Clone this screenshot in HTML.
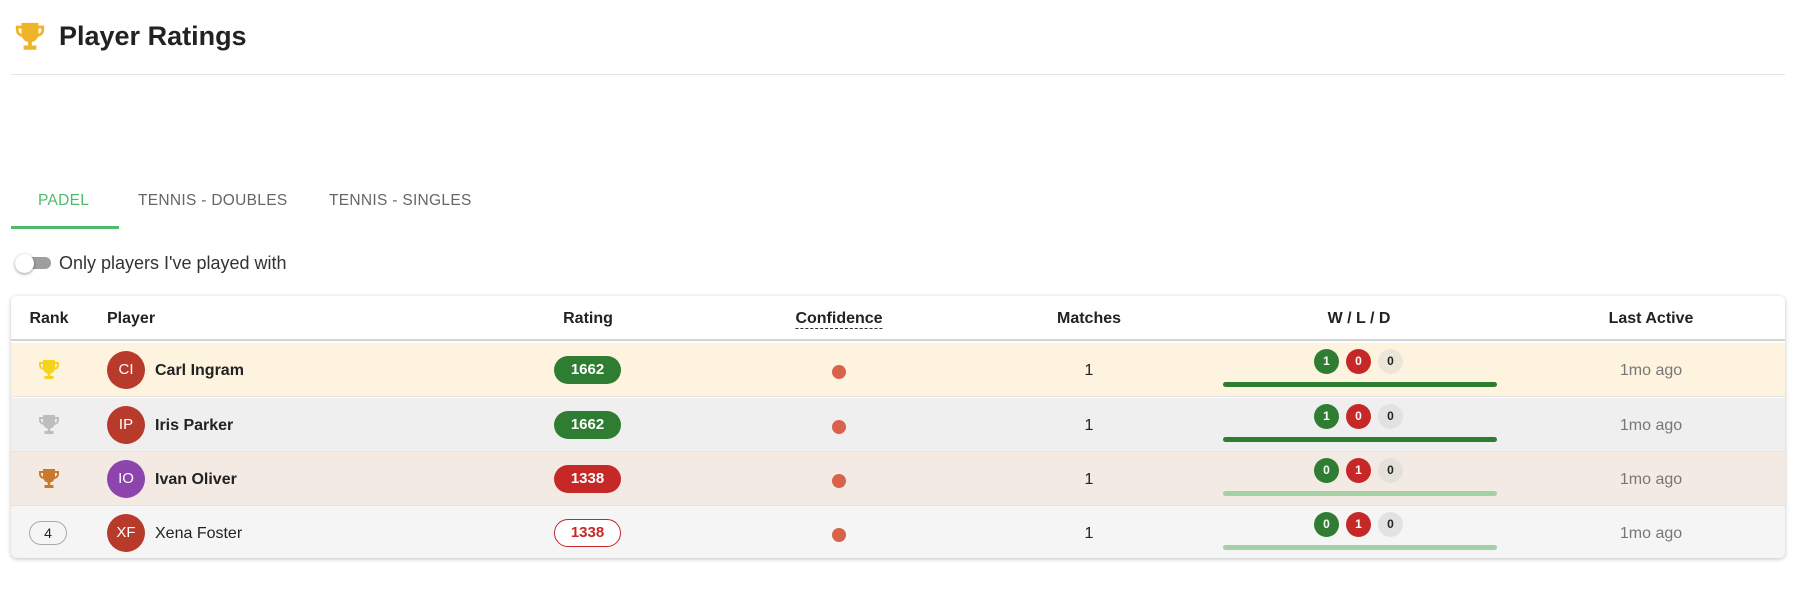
<!DOCTYPE html>
<html><head><meta charset="utf-8"><style>
*{box-sizing:border-box;margin:0;padding:0}
body{width:1800px;height:607px;background:#fff;font-family:"Liberation Sans",Arial,sans-serif;color:#222;position:relative;overflow:hidden}
.abs{position:absolute}
h1{position:absolute;left:59px;top:21px;font-size:27px;font-weight:bold;color:#222}
.div{left:11px;top:74px;width:1774px;height:1px;background:#e3e3e3}
.tab{top:192px;font-size:15.5px;color:#666;letter-spacing:.3px}
.table{left:11px;top:296px;width:1774px;height:262px;border-radius:6px;box-shadow:0 1px 4px rgba(0,0,0,.25);overflow:hidden;background:#fff}
.hdr{position:absolute;left:0;top:0;width:100%;height:45px;border-bottom:2px solid #d4d4d4;font-weight:bold;font-size:16px}
.row{position:absolute;left:0;width:100%;height:54px;border-bottom:1px solid #e4e4e4;font-size:16px}
.c{position:absolute;transform:translateX(-50%);white-space:nowrap}
.av{position:absolute;left:96px;width:38px;height:38px;border-radius:50%;color:#fff;font-size:15px;text-align:center;line-height:38px;top:8px}
.name{position:absolute;left:144px;top:19px;font-weight:bold}
.pill{position:absolute;left:543px;top:13px;width:67px;height:28px;border-radius:14px;color:#fff;font-weight:bold;font-size:15px;text-align:center;line-height:28px}
.dot{position:absolute;left:821px;top:22px;width:14px;height:14px;border-radius:50%;background:#d9634a}
.wl{position:absolute;top:6px;width:25px;height:25px;border-radius:50%;font-size:12px;font-weight:bold;text-align:center;line-height:25px;color:#fff}
.bar{position:absolute;left:1212px;top:39px;width:274px;height:5px;border-radius:3px}
.la{position:absolute;left:1640px;top:19px;transform:translateX(-50%);color:#777}
</style></head><body>
<svg class="abs" style="left:13px;top:20px" width="34" height="34" viewBox="0 0 24 24"><path fill="#f0b429" d="M6 2h12v2h4v3c0 2.5-1.8 4.5-4.4 4.9A5.6 5.6 0 0 1 13.3 15.5v2.5h3.2v3h-9v-3h3.2v-2.5A5.6 5.6 0 0 1 6.4 11.9C3.8 11.5 2 9.5 2 7V4h4V2zm-2 4v1c0 1.3.8 2.4 2 2.8V6H4zm14 0v3.8c1.2-.4 2-1.5 2-2.8V6h-2z"/></svg>
<h1>Player Ratings</h1>
<div class="abs div"></div>
<div class="abs tab" style="left:38px;color:#4cbb6c">PADEL</div>
<div class="abs tab" style="left:138px">TENNIS - DOUBLES</div>
<div class="abs tab" style="left:329px">TENNIS - SINGLES</div>
<div class="abs" style="left:11px;top:226px;width:108px;height:3px;background:#4cbb6c"></div>
<div class="abs" style="left:19px;top:257px;width:32px;height:12px;border-radius:6px;background:#9e9e9e"></div>
<div class="abs" style="left:15px;top:254px;width:19px;height:19px;border-radius:50%;background:#fff;box-shadow:0 1px 3px rgba(0,0,0,.4)"></div>
<div class="abs" style="left:59px;top:253px;font-size:18px;color:#333">Only players I've played with</div>
<div class="abs table">
<div class="hdr">
<span class="c" style="left:38px;top:14px">Rank</span>
<span style="position:absolute;left:96px;top:14px">Player</span>
<span class="c" style="left:577px;top:14px">Rating</span>
<span class="c" style="left:828px;top:14px;border-bottom:1px dashed #333">Confidence</span>
<span class="c" style="left:1078px;top:14px">Matches</span>
<span class="c" style="left:1348px;top:14px">W / L / D</span>
<span class="c" style="left:1640px;top:14px">Last Active</span>
</div>
<div class="row" style="top:47px;background:#fdf3df">
<svg style="position:absolute;left:26px;top:15px" width="24" height="24" viewBox="0 0 24 24"><path fill="#f5d21b" d="M6 2h12v2h4v3c0 2.5-1.8 4.5-4.4 4.9A5.6 5.6 0 0 1 13.3 15.5v2.5h3.2v3h-9v-3h3.2v-2.5A5.6 5.6 0 0 1 6.4 11.9C3.8 11.5 2 9.5 2 7V4h4V2zm-2 4v1c0 1.3.8 2.4 2 2.8V6H4zm14 0v3.8c1.2-.4 2-1.5 2-2.8V6h-2z"/></svg>
<div class="av" style="background:#b83a2a">CI</div><div class="name">Carl Ingram</div>
<div class="pill" style="background:#2e7d32">1662</div><div class="dot"></div>
<span class="c" style="left:1078px;top:19px">1</span>
<div class="wl" style="left:1303px;background:#2e7d32">1</div><div class="wl" style="left:1335px;background:#c62828">0</div><div class="wl" style="left:1367px;background:#ece6da;color:#222">0</div>
<div class="bar" style="background:#2e7d32"></div><div class="la">1mo ago</div></div>
<div class="row" style="top:102px;background:#efefef">
<svg style="position:absolute;left:26px;top:15px" width="24" height="24" viewBox="0 0 24 24"><path fill="#bdbdbd" d="M6 2h12v2h4v3c0 2.5-1.8 4.5-4.4 4.9A5.6 5.6 0 0 1 13.3 15.5v2.5h3.2v3h-9v-3h3.2v-2.5A5.6 5.6 0 0 1 6.4 11.9C3.8 11.5 2 9.5 2 7V4h4V2zm-2 4v1c0 1.3.8 2.4 2 2.8V6H4zm14 0v3.8c1.2-.4 2-1.5 2-2.8V6h-2z"/></svg>
<div class="av" style="background:#b83a2a">IP</div><div class="name">Iris Parker</div>
<div class="pill" style="background:#2e7d32">1662</div><div class="dot"></div>
<span class="c" style="left:1078px;top:19px">1</span>
<div class="wl" style="left:1303px;background:#2e7d32">1</div><div class="wl" style="left:1335px;background:#c62828">0</div><div class="wl" style="left:1367px;background:#e2e2e2;color:#222">0</div>
<div class="bar" style="background:#2e7d32"></div><div class="la">1mo ago</div></div>
<div class="row" style="top:156px;background:#f3eae4">
<svg style="position:absolute;left:26px;top:15px" width="24" height="24" viewBox="0 0 24 24"><path fill="#c77a2e" d="M6 2h12v2h4v3c0 2.5-1.8 4.5-4.4 4.9A5.6 5.6 0 0 1 13.3 15.5v2.5h3.2v3h-9v-3h3.2v-2.5A5.6 5.6 0 0 1 6.4 11.9C3.8 11.5 2 9.5 2 7V4h4V2zm-2 4v1c0 1.3.8 2.4 2 2.8V6H4zm14 0v3.8c1.2-.4 2-1.5 2-2.8V6h-2z"/></svg>
<div class="av" style="background:#8e44ad">IO</div><div class="name">Ivan Oliver</div>
<div class="pill" style="background:#c62828">1338</div><div class="dot"></div>
<span class="c" style="left:1078px;top:19px">1</span>
<div class="wl" style="left:1303px;background:#2e7d32">0</div><div class="wl" style="left:1335px;background:#c62828">1</div><div class="wl" style="left:1367px;background:#e6e0da;color:#222">0</div>
<div class="bar" style="background:#a5cfa5"></div><div class="la">1mo ago</div></div>
<div class="row" style="top:210px;background:#f5f5f5;border-bottom:none">
<div style="position:absolute;left:18px;top:15px;width:38px;height:24px;border:1px solid #aaa;border-radius:12px;text-align:center;line-height:22px;font-size:14px">4</div>
<div class="av" style="background:#b83a2a">XF</div><div class="name" style="font-weight:normal">Xena Foster</div>
<div class="pill" style="background:#fff;color:#c62828;border:1px solid #c62828;line-height:26px">1338</div><div class="dot"></div>
<span class="c" style="left:1078px;top:19px">1</span>
<div class="wl" style="left:1303px;background:#2e7d32">0</div><div class="wl" style="left:1335px;background:#c62828">1</div><div class="wl" style="left:1367px;background:#e2e2e2;color:#222">0</div>
<div class="bar" style="background:#a5cfa5"></div><div class="la">1mo ago</div></div>
</div>
</body></html>
